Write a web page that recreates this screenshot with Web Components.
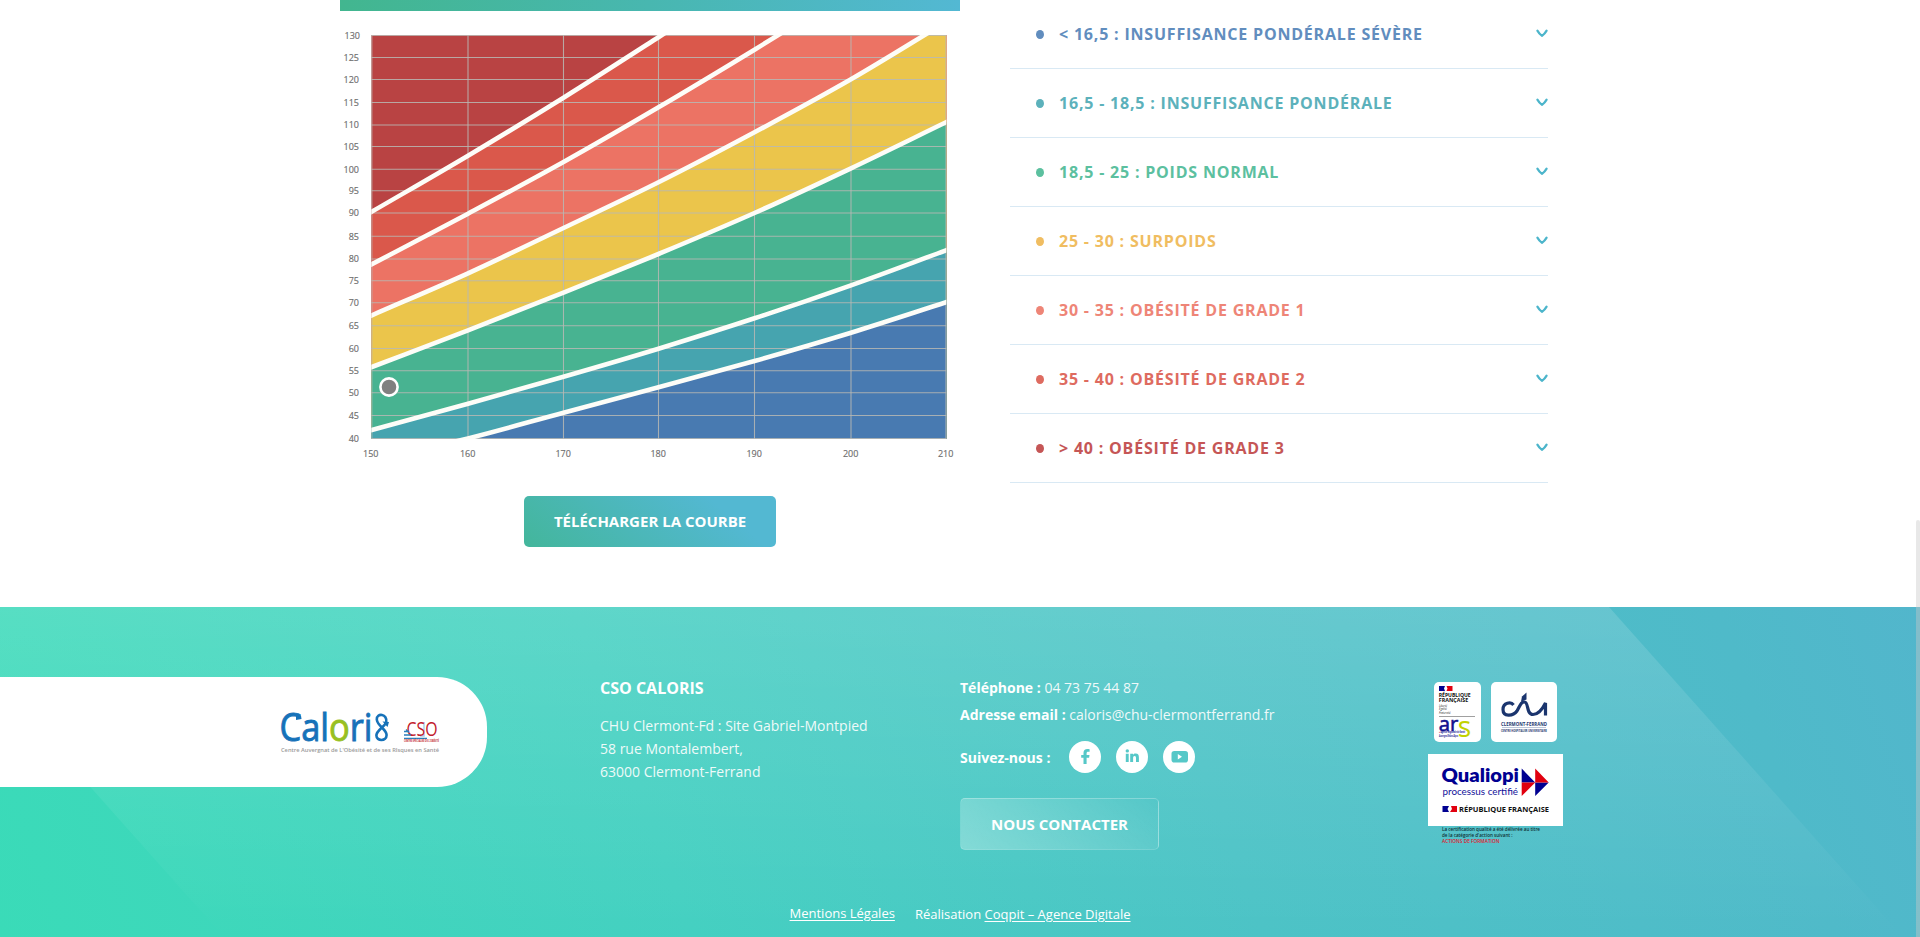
<!DOCTYPE html>
<html lang="fr">
<head>
<meta charset="utf-8">
<title>CSO Caloris – Courbe IMC</title>
<style>
body{margin:0;background:#fff;font-family:"Open Sans","Noto Sans",sans-serif;overflow:hidden}
</style>
</head>
<body>
<caloris-page></caloris-page>
<script>
const define = (name, html, setup) => customElements.define(name, class extends HTMLElement {
  constructor() {
    super();
    const t = document.createElement('template');
    t.innerHTML = html;
    this.attachShadow({mode: 'open'}).append(t.content.cloneNode(true));
  }
  connectedCallback() { if (setup) setup(this, this.shadowRoot); }
});

/* Weight / height chart with the BMI zones */
define('bmi-chart', `<style>
:host{display:block;width:620px;height:458px}
svg{display:block}
text{font:9px "Open Sans","Noto Sans",sans-serif;fill:#6e6e6e;stroke:#6e6e6e;stroke-width:.15px}
</style><svg width="620" height="458" viewBox="340 11 620 458"></svg>`, (host, root) => {
  const xs = [371.8, 468, 563.5, 658.5, 754.5, 851, 946];
  const ys = [35.5, 57.5, 79.5, 102.5, 125, 146.5, 169.2, 190.8, 213, 236.3, 259, 280.7, 302.7, 325.7, 348.5, 370.7, 392.7, 415.5, 438.5];
  const curves = [
    ['#da584b', [211.7, 155.7, 97.7, 37.2, -25]],
    ['#ec7364', [264.3, 213.7, 162, 107.3, 49.7, -10]],
    ['#ebc54b', [315.3, 273.3, 228, 182.3, 132.3, 79.3, 22]],
    ['#48b391', [367, 330.3, 292.7, 254, 213, 168.3, 122.3]],
    ['#46a4af', [430, 403.7, 376.7, 348.7, 318.3, 285.3, 250.3]],
    ['#487ab1', [461, 438.4, 412.7, 387.3, 361, 332.7, 302.3]]
  ];
  /* Smooth path: each segment is a cubic whose tangents follow its neighbours */
  const line = c => {
    const slope = i => {
      const a = Math.max(i - 1, 0), b = Math.min(i + 1, c.length - 1);
      return (c[b] - c[a]) / (xs[b] - xs[a]);
    };
    let d = `M${xs[0]} ${c[0]}`;
    for (let i = 1; i < c.length; i++) {
      const w = (xs[i] - xs[i - 1]) / 3;
      d += `C${xs[i - 1] + w} ${c[i - 1] + slope(i - 1) * w} ${xs[i] - w} ${c[i] - slope(i) * w} ${xs[i]} ${c[i]}`;
    }
    return d;
  };
  let s = '<defs><clipPath id="p"><rect x="371.3" y="35" width="575" height="404"/></clipPath></defs><g clip-path="url(#p)"><rect x="371" y="35" width="576" height="404" fill="#b94343"/>';
  for (const [col, c] of curves) s += `<path d="${line(c)}H960V460H360V${c[0]}Z" fill="${col}"/>`;
  s += `<g stroke="#b8b8b4" stroke-opacity=".85" stroke-width="1.1">` + ys.map(y => `<path d="M371 ${y}H947"/>`).join('') + xs.map(x => `<path d="M${x} 35V439"/>`).join('') + '</g>';
  for (const [, c] of curves) s += `<path d="${line(c)}" fill="none" stroke="#fdfdf8" stroke-width="4.6" stroke-linecap="square"/>`;
  s += '</g>';
  ys.forEach((y, i) => { s += `<text x="${i < 1 ? 360 : 359}" y="${y + 3.4}" text-anchor="end">${130 - 5 * i}</text>`; });
  xs.forEach((x, i) => { s += `<text x="${x - (i ? .3 : 1)}" y="457" text-anchor="middle">${150 + 10 * i}</text>`; });
  s += '<circle cx="389" cy="387" r="8.6" fill="#808080" stroke="#fff" stroke-width="2.6"/>';
  root.querySelector('svg').innerHTML = s;
});

define('cta-button', `<style>
:host{display:flex;align-items:center;justify-content:center;box-sizing:border-box;border-radius:5px;color:#fff;font-size:15px;font-weight:700;padding-bottom:1px;background:linear-gradient(40deg,#43b69b,#53b8d2 78%)}
:host([ghost]){border:1px solid rgba(255,255,255,.2);background:linear-gradient(35deg,rgba(255,255,255,.3),rgba(255,255,255,0))}
</style><slot></slot>`);

define('bmi-row', `<style>
:host{display:flex;align-items:center;box-sizing:border-box;height:69px;border-bottom:1px solid #d9e9f4;padding:0 0 0 26px;font-size:16px;font-weight:700;letter-spacing:.8px}
i{width:8px;height:9px;border-radius:50%;background:currentColor;margin:1px 15px 0 0}
span{flex:1}
svg{display:block;margin-top:-1px}
</style><i></i><span><slot></slot></span><svg width="12" height="9" viewBox="0 0 12 9"><path d="M1.400 1.600Q3.300 5 6 6.800Q8.700 5 10.600 1.600" fill="none" stroke="#4cb5cb" stroke-width="2.200" stroke-linecap="round"/></svg>`,
  h => { h.style.color = h.getAttribute('tone'); });

define('caloris-logo', `<style>:host{display:block}svg{display:block;overflow:visible}text{font-family:"Open Sans","Noto Sans",sans-serif}</style>
<svg width="162" height="46" viewBox="279 710 162 46">
<text x="279.500" y="741" font-size="38" fill="#1672b9" stroke="#1672b9" stroke-width=".9" textLength="93" lengthAdjust="spacingAndGlyphs">Cal<tspan fill="#98c021" stroke="#98c021">o</tspan>ri</text>
<path d="M296 713.500l5 2 .5 3.500-5.500 1z" fill="#1672b9"/>
<path d="M386.200 722.500C388 713.500 376.300 712.500 376.800 719.500C377.200 726 386.600 729 386.600 735C386.600 741.500 376.400 741.500 376.400 735.500C376.400 730 384 727.500 386.200 722.500" fill="none" stroke="#1672b9" stroke-width="2.600"/>
<path d="M382.500 721.500l6.500.5-1.500 5z" fill="#1672b9"/>
<text x="281" y="752" font-size="5.600" font-weight="600" fill="#9a9a9a" textLength="158" lengthAdjust="spacingAndGlyphs">Centre Auvergnat de L'Obésité et de ses RIsques en Santé</text>
<path d="M424 722v14h-4" stroke="#a9d1ec" stroke-width="1.500" fill="none"/>
<text x="406.500" y="736.300" font-size="20" fill="#c2202c" textLength="31" lengthAdjust="spacingAndGlyphs">CSO</text>
<path d="M404 731.500h5M404 735h7M404 738.300h23M406 729.500l3 3" stroke="#2a7fbd" stroke-width="1.300" fill="none"/>
<text x="404" y="741.700" font-size="2.600" font-weight="700" fill="#c2202c" textLength="35" lengthAdjust="spacingAndGlyphs">CENTRE SPÉCIALISÉ DE L'OBÉSITÉ</text>
</svg>`);

define('ars-logo', `<style>:host{display:block;width:47px;height:60px;border-radius:5px;background:#fff}svg{display:block;overflow:visible}text{font-family:"Open Sans","Noto Sans",sans-serif}</style>
<svg width="47" height="60" viewBox="1434 682 47 60">
<path d="M1439 686h6l-1 2.500 1 2.500h-6z" fill="#000091"/><path d="M1446.500 686h6v5h-6l1-2.500z" fill="#e1000f"/>
<g font-size="4.700" font-weight="700" fill="#111"><text x="1438.700" y="696.800" textLength="32" lengthAdjust="spacingAndGlyphs">RÉPUBLIQUE</text><text x="1438.700" y="702" textLength="29.500" lengthAdjust="spacingAndGlyphs">FRANÇAISE</text></g>
<g font-size="2.700" font-style="italic" fill="#222"><text x="1439" y="706.500">Liberté</text><text x="1439" y="710">Égalité</text><text x="1439" y="713.500">Fraternité</text></g>
<path d="M1439 716.500h36" stroke="#777" stroke-width=".7"/>
<text x="1438.800" y="731" font-size="19.500" fill="#12128e" stroke="#12128e" stroke-width=".6" textLength="19.500" lengthAdjust="spacingAndGlyphs">ar</text>
<text x="1457.800" y="737" font-size="30" fill="#c3d200" textLength="13.500" lengthAdjust="spacingAndGlyphs">s</text>
<g font-size="2.500" font-weight="700" fill="#12128e"><text x="1439" y="733" textLength="26" lengthAdjust="spacingAndGlyphs"><tspan fill="#e1000f">●</tspan> Agence Régionale de Santé</text><text x="1439" y="736.500" textLength="19" lengthAdjust="spacingAndGlyphs">Auvergne-Rhône-Alpes</text></g>
</svg>`);

define('chu-logo', `<style>:host{display:block;width:66px;height:60px;border-radius:5px;background:#fff}svg{display:block}text{font-family:"Open Sans","Noto Sans",sans-serif;font-weight:700}</style>
<svg width="66" height="60" viewBox="1491 682 66 60">
<path d="M1513.500 705C1511 701.500 1503 702.500 1503 709.500C1503 717 1513 716.500 1517 711C1520 706 1521 701.500 1524.500 702C1529 702.500 1526 714.500 1533 714.500C1539 714.500 1543 708 1545.500 703V715.500" fill="none" stroke="#1b356e" stroke-width="3.200"/>
<path d="M1521 701.500l1-5 4.500-4v7z" fill="#1b356e"/>
<text x="1501" y="725.500" font-size="5" fill="#1b356e" textLength="46" lengthAdjust="spacingAndGlyphs">CLERMONT-FERRAND</text>
<path d="M1502 727.500h44" stroke="#9fadc8" stroke-width=".7"/>
<text x="1501" y="731.500" font-size="2.800" fill="#1b356e" textLength="46" lengthAdjust="spacingAndGlyphs">CENTRE HOSPITALIER UNIVERSITAIRE</text>
</svg>`);

define('qualiopi-logo', `<style>:host{display:block}svg{display:block}text{font-family:"Open Sans","Noto Sans",sans-serif}</style>
<svg width="135" height="92" viewBox="1428 754 135 92">
<path d="M1428 754h135v72h-135z" fill="#fff"/>
<text x="1441.500" y="782" font-size="19.500" font-weight="800" fill="#000091" textLength="77.500" lengthAdjust="spacingAndGlyphs" style="font-family:Lato,sans-serif">Qualiopi</text>
<text x="1442.500" y="795" font-size="9" fill="#12129a" textLength="75.500" lengthAdjust="spacingAndGlyphs" style="font-family:Lato,sans-serif">processus certifié</text>
<path d="M1521.700 768.500v14h13.500zM1535.200 782.500v13.500l13.500-13.500z" fill="#000091"/><path d="M1535.200 768.500v14h13.500zM1521.700 782.500v13.500l13.500-13.500z" fill="#e1000f"/>
<path d="M1442.500 806h6.500l-1.500 3 1.500 3h-6.500z" fill="#000091"/><path d="M1451 806h6v6h-7l2-3z" fill="#e1000f"/>
<text x="1459" y="811.800" font-size="7.400" font-weight="700" fill="#111" textLength="90" lengthAdjust="spacingAndGlyphs">RÉPUBLIQUE FRANÇAISE</text>
<g font-size="4.400" font-weight="600" fill="#0e3034"><text x="1442" y="831" textLength="98" lengthAdjust="spacingAndGlyphs">La certification qualité a été délivrée au titre</text><text x="1442" y="837.200" textLength="70.500" lengthAdjust="spacingAndGlyphs">de la catégorie d'action suivant :</text><text x="1442" y="843.300" fill="#e1142a" textLength="57.500" lengthAdjust="spacingAndGlyphs">ACTIONS DE FORMATION</text></g>
</svg>`);

define('social-links', `<style>
:host{display:flex;gap:15px}
b{display:block;width:32px;height:32px;border-radius:50%;background:#fff}
svg{display:block;fill:#56c8c8}
</style>
<b><svg width="32" height="32"><path d="M14.500 23V16.700h-2.300V13.900h2.300V12c0-2.600 1.400-4 3.900-4 .9 0 1.800.1 2.200.2v2.600h-1.500c-1.100 0-1.500.6-1.500 1.500v1.600h2.900l-.4 2.800h-2.500V23z"/></svg></b>
<b><svg width="32" height="32"><circle cx="11.300" cy="9.900" r="1.700"/><path d="M9.800 12.700h2.900V21H9.800zM14.200 12.700H17v1.200c.5-.9 1.500-1.400 2.600-1.400 2.600 0 3.300 1.500 3.300 3.900V21H20v-4.100c0-1.200-.3-2-1.400-2-1.100 0-1.500.8-1.500 2V21h-2.900z"/></svg></b>
<b><svg width="32" height="32"><rect x="8.500" y="10" width="16.500" height="11.500" rx="2.800"/><path d="M14.800 13l4.200 2.700-4.200 2.700z" fill="#fff"/></svg></b>`);

define('site-footer', `<style>
:host{display:grid;grid-template-columns:487px 360px 581px 135px;grid-template-rows:70px 192px 1fr;box-sizing:border-box;height:330px;color:#fff;
background:linear-gradient(70deg,#3adbb8,#44d0c1 34%,#4cc3c6 62%,#4fbac9 90%,#52b6cc);position:relative}
.band{position:absolute;inset:0;z-index:0}
.pill{grid-column:1;grid-row:2;height:110px;background:#fff;border-radius:0 50px 50px 0;display:flex;justify-content:flex-end;z-index:1}
caloris-logo{margin:33px 46px 0 0}
.addr,.contact,.logos{grid-row:2;z-index:1}
.addr{grid-column:2;padding:0 0 0 113px;box-sizing:border-box;white-space:nowrap}
h3{margin:0;font-size:16px;font-weight:700;line-height:22px}
p{margin:15px 0 0;font-size:14px;line-height:23px;opacity:.9}
.contact{grid-column:3;padding-left:113px;box-sizing:border-box;font-size:14px;white-space:nowrap}
.l{line-height:27px;margin-top:-3px}.l+.l{margin:0}
.l span{opacity:.9}
strong{font-weight:700}
.follow{display:flex;align-items:center;gap:19px;margin-top:13px}
cta-button{width:199px;height:52px;margin-top:25px}
.logos{grid-column:4;padding-top:5px}
.pair{display:flex;gap:10px;padding-left:6px;margin-bottom:12px}
nav{grid-column:1/-1;grid-row:3;z-index:1;display:flex;gap:20px;padding-left:789.500px;font-size:13px;line-height:18px;padding-top:35px}
nav span{padding-top:1px}
u{text-underline-offset:2px}
</style>
<svg class="band" width="1920" height="330"><defs><linearGradient id="g" x1="0" y1="0" x2="0" y2="1"><stop stop-color="#fff" stop-opacity=".14"/><stop offset="1" stop-color="#fff" stop-opacity="0"/></linearGradient></defs><path d="M-70 0H1609L1903 330H224Z" fill="url(#g)"/></svg>
<div class="pill"><caloris-logo></caloris-logo></div>
<div class="addr"><h3>CSO CALORIS</h3><p>CHU Clermont-Fd : Site Gabriel-Montpied<br>58 rue Montalembert,<br>63000 Clermont-Ferrand</p></div>
<div class="contact"><div class="l"><strong>Téléphone :</strong> <span>04 73 75 44 87</span></div><div class="l"><strong>Adresse email :</strong> <span>caloris@chu-clermontferrand.fr</span></div>
<div class="follow"><strong>Suivez-nous :</strong><social-links></social-links></div><cta-button ghost>NOUS CONTACTER</cta-button></div>
<div class="logos"><div class="pair"><ars-logo></ars-logo><chu-logo></chu-logo></div><qualiopi-logo></qualiopi-logo></div>
<nav><u>Mentions Légales</u><span>Réalisation <u>Coqpit – Agence Digitale</u></span></nav>`);

define('caloris-page', `<style>
:host{display:block;width:1920px;height:937px;overflow:hidden;position:relative}
main{display:flex;gap:50px;height:607px;padding-left:340px;box-sizing:border-box}
.left{width:620px;display:flex;flex-direction:column;align-items:center}
.bar{width:620px;height:11px;background:linear-gradient(90deg,#42b68f,#48b7b0 50%,#53b8d3)}
.left cta-button{width:252px;height:51px;margin-top:27px}
.right{width:538px}
.scroll{position:absolute;right:0;top:520px;width:4px;height:417px;border-radius:2px 2px 0 0;background:rgba(200,200,200,.42);z-index:2}
</style>
<main><div class="left"><div class="bar"></div><bmi-chart></bmi-chart><cta-button>TÉLÉCHARGER LA COURBE</cta-button></div>
<div class="right">
<bmi-row tone="#618dbe">&lt; 16,5 : INSUFFISANCE PONDÉRALE SÉVÈRE</bmi-row>
<bmi-row tone="#5cb1bb">16,5 - 18,5 : INSUFFISANCE PONDÉRALE</bmi-row>
<bmi-row tone="#5cc09f">18,5 - 25 : POIDS NORMAL</bmi-row>
<bmi-row tone="#f0bd61">25 - 30 : SURPOIDS</bmi-row>
<bmi-row tone="#ee8577">30 - 35 : OBÉSITÉ DE GRADE 1</bmi-row>
<bmi-row tone="#de6b60">35 - 40 : OBÉSITÉ DE GRADE 2</bmi-row>
<bmi-row tone="#c55656">&gt; 40 : OBÉSITÉ DE GRADE 3</bmi-row>
</div></main>
<site-footer></site-footer><div class="scroll"></div>`);
</script>
</body>
</html>
